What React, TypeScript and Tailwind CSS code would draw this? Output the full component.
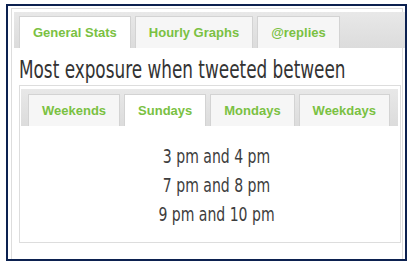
import React from "react";

const outerTabs = ["General Stats", "Hourly Graphs", "@replies"];
const innerTabs = ["Weekends", "Sundays", "Mondays", "Weekdays"];
const times = ["3 pm and 4 pm", "7 pm and 8 pm", "9 pm and 10 pm"];

function Tab({ label, active }: { label: string; active: boolean }) {
  return (
    <div
      className={
        "h-[32px] px-[13px] flex items-center border border-[#d3d3d3] border-b-0 font-['Liberation_Sans',Arial,sans-serif] font-bold text-[13px] text-[#7ac142] whitespace-nowrap " +
        (active ? "bg-white" : "bg-[#f6f6f6]")
      }
    >
      {label}
    </div>
  );
}

export default function App() {
  return (
    <div className="w-[413px] h-[267px] bg-white pl-[6px] pt-[4px]">
      <div className="w-[401px] h-[257px] border-2 border-[#0c2150] overflow-hidden bg-white">
        <div className="ml-[3px] mt-[2px] w-[392px] h-[300px] border border-[#dddddd] px-[2px] pt-[3px]">
          <div className="flex gap-[4px] pl-[5px] pt-[4px] w-[410px] h-[36px] bg-gradient-to-b from-[#e8e8e8] to-[#dcdcdc]">
            {outerTabs.map((t, i) => (
              <Tab key={t} label={t} active={i === 0} />
            ))}
          </div>

          <div className="pl-[5px]">
            <h1 className="mt-[7px] origin-left scale-x-75 font-['DejaVu_Sans_Condensed','DejaVu_Sans',sans-serif] text-[25px] leading-[30px] text-[#333333] whitespace-nowrap">
              Most exposure when tweeted between
            </h1>

            <div className="w-[382px] border border-[#dddddd] pl-[1px] pr-[2px] pt-[3px]">
              <div className="flex gap-[4px] pl-[7px] pt-[5px] h-[37px] bg-gradient-to-b from-[#e8e8e8] to-[#dcdcdc]">
                {innerTabs.map((t, i) => (
                  <Tab key={t} label={t} active={i === 1} />
                ))}
              </div>
              <div className="pt-[16px] pb-[13px] pl-[14px] text-center font-['DejaVu_Sans_Condensed','DejaVu_Sans',sans-serif] text-[20px] leading-[29px] text-[#3d3d3d]">
                {times.map((t) => (
                  <div key={t} className="scale-x-[0.78]">
                    {t}
                  </div>
                ))}
              </div>
            </div>
          </div>
        </div>
      </div>
    </div>
  );
}
